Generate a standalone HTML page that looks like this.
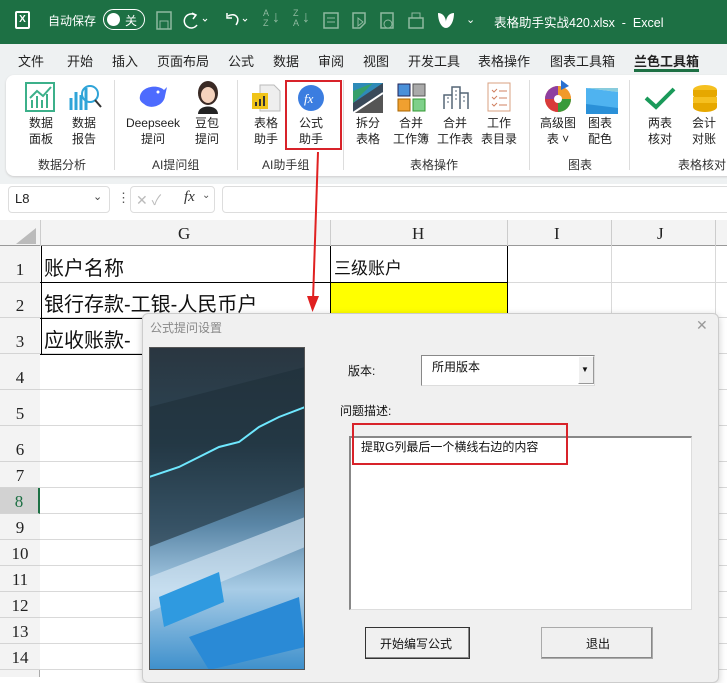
<!DOCTYPE html>
<html><head><meta charset="utf-8"><style>
*{margin:0;padding:0;box-sizing:border-box}
body{width:727px;height:677px;overflow:hidden;position:relative;background:#fff;font-family:"Liberation Sans","Noto Sans CJK SC",sans-serif;}
.a{position:absolute}
.t{position:absolute;white-space:nowrap}
.tab{position:absolute;top:51px;font-size:13px;color:#222;white-space:nowrap}
.lbl{position:absolute;font-size:12px;color:#222;text-align:center;line-height:16px;width:60px}
.ser{font-family:"Liberation Serif","Noto Serif CJK SC",serif}
.rh{position:absolute;left:0;width:40px;text-align:center;font-size:17px;color:#222;border-bottom:1px solid #d4d4d4;background:#f3f3f3;font-family:"Liberation Serif",serif}
.hl{position:absolute;left:40px;width:687px;height:1px;background:#d9d9d9}
.ic{position:absolute;top:10px}
</style></head><body>
<!-- title bar -->
<div class="a" style="left:0;top:0;width:727px;height:44px;background:#1d7044"></div>
<div class="t" style="left:15px;top:11px;width:15px;height:18px;border:2px solid #fff;border-radius:2px;color:#fff;font-size:10px;font-weight:bold;line-height:13px;text-align:center">X</div>
<div class="t" style="left:48px;top:12px;color:#fff;font-size:12px">自动保存</div>
<div class="a" style="left:103px;top:9px;width:42px;height:21px;border:1.5px solid #fff;border-radius:11px"></div>
<div class="a" style="left:107px;top:13px;width:13px;height:13px;border-radius:50%;background:#fff"></div>
<div class="t" style="left:125px;top:12px;color:#fff;font-size:12px">关</div>
<svg class="ic" style="left:155px" width="20" height="22"><rect x="2" y="2" width="14" height="17" fill="none" stroke="#8fb9a0" stroke-width="1.5"/><rect x="5" y="11" width="8" height="8" fill="none" stroke="#8fb9a0"/></svg>
<svg class="ic" style="left:183px" width="30" height="22"><path d="M12 5 A7 7 0 1 0 14 15" fill="none" stroke="#fff" stroke-width="1.5"/><path d="M9 3 L13 5 L10 9" fill="none" stroke="#fff" stroke-width="1.5"/><path d="M20 9l2 2 2-2" stroke="#fff" fill="none"/></svg>
<svg class="ic" style="left:223px" width="30" height="22"><path d="M5 6 C12 2 18 8 13 15" fill="none" stroke="#fff" stroke-width="1.5"/><path d="M4 3 V8 H9" fill="none" stroke="#fff" stroke-width="1.5"/><path d="M20 9l2 2 2-2" stroke="#fff" fill="none"/></svg>
<div class="t" style="left:263px;top:8px;color:#8fb9a0;font-size:9px;line-height:10px">A<br>Z</div>
<div class="t" style="left:272px;top:9px;color:#8fb9a0;font-size:16px">↓</div>
<div class="t" style="left:293px;top:8px;color:#8fb9a0;font-size:9px;line-height:10px">Z<br>A</div>
<div class="t" style="left:302px;top:9px;color:#8fb9a0;font-size:16px">↓</div>
<svg class="ic" style="left:322px" width="20" height="22"><rect x="2" y="3" width="14" height="15" fill="none" stroke="#8fb9a0" stroke-width="1.5"/><path d="M5 8h8M5 12h8" stroke="#8fb9a0"/></svg>
<svg class="ic" style="left:350px" width="20" height="22"><path d="M3 3h12v10l-5 5H3z" fill="none" stroke="#8fb9a0" stroke-width="1.5"/><path d="M8 8l5 4-5 4z" fill="none" stroke="#8fb9a0"/></svg>
<svg class="ic" style="left:378px" width="20" height="22"><path d="M3 3h12v15H3z" fill="none" stroke="#8fb9a0" stroke-width="1.5"/><circle cx="10" cy="14" r="4" fill="#1d7044" stroke="#8fb9a0"/></svg>
<svg class="ic" style="left:406px" width="20" height="22"><rect x="3" y="8" width="14" height="10" fill="none" stroke="#8fb9a0" stroke-width="1.5"/><rect x="6" y="3" width="8" height="5" fill="none" stroke="#8fb9a0"/></svg>
<svg class="ic" style="left:436px" width="20" height="22"><path d="M2 3 C8 3 10 9 10 12 C10 9 12 3 18 3 C18 12 14 18 10 18 C6 18 2 12 2 3Z" fill="#fff"/></svg>
<div class="t" style="left:466px;top:13px;color:#fff;font-size:11px">⌄</div>
<div class="t" style="left:494px;top:12px;color:#fff;font-size:12.5px">表格助手实战420.xlsx &nbsp;- &nbsp;Excel</div>
<!-- tabs -->
<div class="a" style="left:0;top:44px;width:727px;height:140px;background:#eef1f2"></div>
<div class="tab" style="left:18px">文件</div>
<div class="tab" style="left:67px">开始</div>
<div class="tab" style="left:112px">插入</div>
<div class="tab" style="left:157px">页面布局</div>
<div class="tab" style="left:228px">公式</div>
<div class="tab" style="left:273px">数据</div>
<div class="tab" style="left:318px">审阅</div>
<div class="tab" style="left:363px">视图</div>
<div class="tab" style="left:408px">开发工具</div>
<div class="tab" style="left:478px">表格操作</div>
<div class="tab" style="left:550px">图表工具箱</div>
<div class="tab" style="left:634px;font-weight:bold">兰色工具箱</div>
<div class="a" style="left:634px;top:69px;width:65px;height:3px;background:#1d7044"></div>
<!-- ribbon -->
<div class="a" style="left:6px;top:75px;width:730px;height:101px;background:#fff;border-radius:8px;box-shadow:0 1px 2px #ccc"></div>
<div class="a" style="left:114px;top:80px;width:1px;height:90px;background:#ddd"></div>
<div class="a" style="left:237px;top:80px;width:1px;height:90px;background:#ddd"></div>
<div class="a" style="left:343px;top:80px;width:1px;height:90px;background:#ddd"></div>
<div class="a" style="left:529px;top:80px;width:1px;height:90px;background:#ddd"></div>
<div class="a" style="left:629px;top:80px;width:1px;height:90px;background:#ddd"></div>
<!-- icons -->
<svg class="a" style="left:25px;top:82px" width="30" height="30"><rect x="1" y="1" width="28" height="28" fill="none" stroke="#3cb08a" stroke-width="2"/><path d="M5 16 L12 9 L18 14 L26 5" stroke="#3cb08a" stroke-width="2" fill="none"/><path d="M7 26V18M12 26V14M17 26V18M22 26V12" stroke="#3cb08a" stroke-width="2"/></svg>
<svg class="a" style="left:68px;top:82px" width="34" height="30"><path d="M3 28V16M8 28V10M13 28V13M18 28V6" stroke="#2fa4d8" stroke-width="3"/><circle cx="22" cy="12" r="8" fill="none" stroke="#2fa4d8" stroke-width="2"/><path d="M27 18L33 25" stroke="#333" stroke-width="2"/></svg>
<svg class="a" style="left:138px;top:84px" width="30" height="26"><path d="M2 12 C4 2 20 0 26 6 L29 3 L27 12 C26 22 12 26 6 20 C3 18 1 16 2 12Z" fill="#4d6bfe"/><circle cx="20" cy="8" r="1.5" fill="#fff"/></svg>
<svg class="a" style="left:195px;top:80px" width="26" height="34"><ellipse cx="13" cy="13" rx="10" ry="12" fill="#3a2a25"/><ellipse cx="13" cy="15" rx="7" ry="8" fill="#f4d2bd"/><path d="M3 34 C3 24 23 24 23 34Z" fill="#222"/></svg>
<svg class="a" style="left:250px;top:83px" width="32" height="30"><path d="M10 2H24L30 8V28H10Z" fill="#eee" stroke="#bbb"/><rect x="2" y="10" width="16" height="16" fill="#f0c419"/><path d="M6 23V19M10 23V16M14 23V13" stroke="#333" stroke-width="2"/></svg>
<svg class="a" style="left:297px;top:84px" width="28" height="28"><circle cx="14" cy="14" r="13" fill="#3b7de0"/><text x="7" y="19" font-size="13" font-style="italic" fill="#fff" font-family="Liberation Serif">fx</text></svg>
<svg class="a" style="left:353px;top:83px" width="30" height="30"><rect width="30" height="30" fill="#3a4a5a"/><path d="M0 0H30L0 20Z" fill="#2e8bb8"/><path d="M0 8 L20 0 L0 20Z" fill="#36a06a"/><path d="M0 30 L30 12 V30Z" fill="#555"/><path d="M0 30L30 10" stroke="#fff" stroke-width="2"/></svg>
<svg class="a" style="left:397px;top:83px" width="30" height="30"><rect x="1" y="1" width="12" height="12" fill="#4a90d9" stroke="#225"/><rect x="16" y="1" width="12" height="12" fill="#aaa" stroke="#555"/><rect x="1" y="16" width="12" height="12" fill="#f0a030" stroke="#a60"/><rect x="16" y="16" width="12" height="12" fill="#7fd08a" stroke="#393"/></svg>
<svg class="a" style="left:442px;top:83px" width="28" height="28"><path d="M2 26V12H10V26M10 26V4H18V26M18 26V10H26V26" fill="none" stroke="#567" stroke-width="1.5"/><path d="M5 15h2M5 19h2M13 8h2M13 12h2M13 16h2M21 14h2M21 18h2" stroke="#567"/></svg>
<svg class="a" style="left:487px;top:82px" width="24" height="30"><rect x="1" y="1" width="22" height="28" fill="#fff" stroke="#d9a080"/><path d="M5 8l2 2 3-3M5 15l2 2 3-3M5 22l2 2 3-3M12 9h8M12 16h8M12 23h8" stroke="#d08060" fill="none"/></svg>
<svg class="a" style="left:543px;top:80px" width="30" height="34"><circle cx="15" cy="19" r="13" fill="#e86a2a"/><path d="M15 19 L15 6 A13 13 0 0 1 28 19Z" fill="#f29a2a"/><path d="M15 19 L2 19 A13 13 0 0 1 15 6Z" fill="#8e3fa0"/><path d="M15 19 L15 32 A13 13 0 0 1 2 19Z" fill="#d83a3a"/><path d="M15 19 L28 19 A13 13 0 0 1 15 32Z" fill="#3a9a3a"/><circle cx="15" cy="19" r="4" fill="#fff"/><path d="M18 0 L26 6 L18 10Z" fill="#2a70d0"/></svg>
<svg class="a" style="left:586px;top:88px" width="32" height="26"><path d="M0 0H32V4L0 0Z" fill="#8cd"/><path d="M0 0 L32 4 V26 H0Z" fill="#4fb3f0"/><path d="M0 16 L32 20 V26 H0Z" fill="#2a90d8"/></svg>
<svg class="a" style="left:644px;top:86px" width="32" height="24"><path d="M2 12 L12 21 L30 3" stroke="#1a9a5a" stroke-width="4" fill="none"/></svg>
<svg class="a" style="left:690px;top:83px" width="30" height="30"><ellipse cx="15" cy="7" rx="12" ry="5" fill="#f5c020"/><path d="M3 7v5a12 5 0 0 0 24 0V7" fill="#e6a800"/><path d="M3 14v5a12 5 0 0 0 24 0v-5" fill="#f5c020"/><path d="M3 20v4a12 5 0 0 0 24 0v-4" fill="#e6a800"/></svg>
<!-- ribbon labels -->
<div class="lbl" style="left:11px;top:115px">数据<br>面板</div>
<div class="lbl" style="left:54px;top:115px">数据<br>报告</div>
<div class="lbl" style="left:123px;top:115px">Deepseek<br>提问</div>
<div class="lbl" style="left:177px;top:115px">豆包<br>提问</div>
<div class="lbl" style="left:236px;top:115px">表格<br>助手</div>
<div class="lbl" style="left:281px;top:115px">公式<br>助手</div>
<div class="lbl" style="left:338px;top:115px">拆分<br>表格</div>
<div class="lbl" style="left:381px;top:115px">合并<br>工作簿</div>
<div class="lbl" style="left:425px;top:115px">合并<br>工作表</div>
<div class="lbl" style="left:469px;top:115px">工作<br>表目录</div>
<div class="lbl" style="left:528px;top:115px">高级图<br>表 ˅</div>
<div class="lbl" style="left:570px;top:115px">图表<br>配色</div>
<div class="lbl" style="left:630px;top:115px">两表<br>核对</div>
<div class="lbl" style="left:674px;top:115px">会计<br>对账</div>
<div class="t" style="left:38px;top:156px;font-size:12px;color:#333">数据分析</div>
<div class="t" style="left:152px;top:156px;font-size:12px;color:#333">AI提问组</div>
<div class="t" style="left:262px;top:156px;font-size:12px;color:#333">AI助手组</div>
<div class="t" style="left:410px;top:156px;font-size:12px;color:#333">表格操作</div>
<div class="t" style="left:568px;top:156px;font-size:12px;color:#333">图表</div>
<div class="t" style="left:678px;top:156px;font-size:12px;color:#333">表格核对</div>
<div class="a" style="left:285px;top:80px;width:57px;height:70px;border:2px solid #d8232a"></div>
<!-- formula bar -->
<div class="a" style="left:8px;top:186px;width:102px;height:27px;background:#fff;border:1px solid #ddd;border-radius:4px"></div>
<div class="t" style="left:15px;top:191px;font-size:13px;color:#222">L8</div>
<div class="t" style="left:93px;top:190px;font-size:11px;color:#444">⌄</div>
<div class="t" style="left:117px;top:190px;font-size:13px;color:#555">⋮</div>
<div class="a" style="left:130px;top:186px;width:85px;height:27px;background:#fff;border:1px solid #ddd;border-radius:4px"></div>
<div class="t" style="left:136px;top:190px;font-size:14px;color:#bbb">✕ ✓</div>
<div class="t ser" style="left:184px;top:189px;font-size:15px;font-style:italic;color:#333">fx</div>
<div class="t" style="left:202px;top:190px;font-size:10px;color:#555">⌄</div>
<div class="a" style="left:222px;top:186px;width:510px;height:27px;background:#fff;border:1px solid #ddd;border-radius:4px"></div>
<!-- grid headers -->
<div class="a" style="left:0;top:220px;width:727px;height:26px;background:#f3f3f3;border-bottom:1px solid #999"></div>
<svg class="a" style="left:10px;top:226px" width="28" height="20"><path d="M26 2V18H6Z" fill="#bbb"/></svg>
<div class="a" style="left:40px;top:220px;width:1px;height:26px;background:#ccc"></div>
<div class="a" style="left:330px;top:220px;width:1px;height:26px;background:#ccc"></div>
<div class="a" style="left:507px;top:220px;width:1px;height:26px;background:#ccc"></div>
<div class="a" style="left:611px;top:220px;width:1px;height:26px;background:#ccc"></div>
<div class="a" style="left:715px;top:220px;width:1px;height:26px;background:#ccc"></div>
<div class="t ser" style="left:178px;top:224px;font-size:17px;color:#222">G</div>
<div class="t ser" style="left:412px;top:224px;font-size:17px;color:#222">H</div>
<div class="t ser" style="left:554px;top:224px;font-size:17px;color:#222">I</div>
<div class="t ser" style="left:657px;top:224px;font-size:17px;color:#222">J</div>
<!-- row headers -->
<div class="a" style="left:0;top:246px;width:40px;height:431px;background:#f3f3f3;border-right:1px solid #aaa"></div>
<div class="rh" style="top:246px;height:37px;line-height:48px">1</div>
<div class="rh" style="top:283px;height:35px;line-height:46px">2</div>
<div class="rh" style="top:318px;height:36px;line-height:48px">3</div>
<div class="rh" style="top:354px;height:36px;line-height:48px">4</div>
<div class="rh" style="top:390px;height:36px;line-height:48px">5</div>
<div class="rh" style="top:426px;height:36px;line-height:48px">6</div>
<div class="rh" style="top:462px;height:26px;line-height:28px">7</div>
<div class="rh" style="top:488px;height:26px;line-height:28px;background:#d2d2d2;color:#1d7044;border-right:2px solid #1d7044">8</div>
<div class="rh" style="top:514px;height:26px;line-height:28px">9</div>
<div class="rh" style="top:540px;height:26px;line-height:28px">10</div>
<div class="rh" style="top:566px;height:26px;line-height:28px">11</div>
<div class="rh" style="top:592px;height:26px;line-height:28px">12</div>
<div class="rh" style="top:618px;height:26px;line-height:28px">13</div>
<div class="rh" style="top:644px;height:26px;line-height:28px">14</div>
<!-- grid lines -->
<div class="hl" style="top:282px"></div><div class="hl" style="top:317px"></div><div class="hl" style="top:353px"></div>
<div class="hl" style="top:389px"></div><div class="hl" style="top:425px"></div><div class="hl" style="top:461px"></div>
<div class="hl" style="top:487px"></div><div class="hl" style="top:513px"></div><div class="hl" style="top:539px"></div>
<div class="hl" style="top:565px"></div><div class="hl" style="top:591px"></div><div class="hl" style="top:617px"></div>
<div class="hl" style="top:643px"></div><div class="hl" style="top:669px"></div>
<div class="a" style="left:611px;top:246px;width:1px;height:431px;background:#d9d9d9"></div>
<div class="a" style="left:715px;top:246px;width:1px;height:431px;background:#d9d9d9"></div>
<!-- data cells -->
<div class="a" style="left:330px;top:283px;width:177px;height:35px;background:#ffff00"></div>
<div class="a" style="left:40px;top:282px;width:467px;height:1px;background:#000"></div>
<div class="a" style="left:40px;top:318px;width:467px;height:1px;background:#000"></div>
<div class="a" style="left:40px;top:354px;width:290px;height:1px;background:#000"></div>
<div class="a" style="left:330px;top:246px;width:1px;height:108px;background:#000"></div>
<div class="a" style="left:507px;top:246px;width:1px;height:72px;background:#000"></div>
<div class="a" style="left:41px;top:246px;width:1px;height:108px;background:#000"></div>
<div class="t" style="left:44px;top:252px;font-size:20px;color:#111">账户名称</div>
<div class="t" style="left:334px;top:254px;font-size:17px;color:#111">三级账户</div>
<div class="t" style="left:44px;top:288px;font-size:20px;color:#111">银行存款-工银-人民币户</div>
<div class="t" style="left:44px;top:324px;font-size:20px;color:#111">应收账款-</div>
<!-- arrow -->
<svg class="a" style="left:300px;top:150px" width="30" height="165"><path d="M18 2 L13 150" stroke="#e02020" stroke-width="2"/><path d="M7 146 L12.5 162 L19 146Z" fill="#e02020"/></svg>
<!-- dialog -->
<div class="a" style="left:142px;top:313px;width:577px;height:370px;background:#f0f0f0;border:1px solid #ccc;border-radius:6px;box-shadow:0 2px 8px rgba(0,0,0,.2)"></div>
<div class="t" style="left:150px;top:319px;font-size:12px;color:#888">公式提问设置</div>
<div class="t" style="left:696px;top:317px;font-size:14px;color:#999">✕</div>
<svg class="a" style="left:149px;top:347px" width="156" height="323">
<defs><linearGradient id="g" x1="0" y1="0" x2="0" y2="1"><stop offset="0" stop-color="#2a3640"/><stop offset="0.3" stop-color="#2c4656"/><stop offset="0.55" stop-color="#5a86a6"/><stop offset="0.75" stop-color="#a8cce6"/><stop offset="1" stop-color="#3e90cc"/></linearGradient></defs>
<rect width="156" height="323" fill="url(#g)"/>
<path d="M0 60 L156 20 L156 140 L0 200Z" fill="#1e2e38" opacity=".6"/>
<path d="M0 130 L30 120 L50 110 L70 100 L90 95 L110 80 L130 70 L156 60" stroke="#6fe8ff" stroke-width="2" fill="none"/>
<path d="M0 230 L156 170 L156 200 L0 265Z" fill="#dbeaf5" opacity=".6"/>
<path d="M10 250 L70 225 L75 255 L15 280Z" fill="#2f9ae0"/>
<path d="M40 290 L150 250 L156 300 L60 323Z" fill="#2a8ad6"/>
</svg>
<div class="a" style="left:149px;top:347px;width:156px;height:323px;border:1px solid #555"></div>
<div class="t" style="left:348px;top:362px;font-size:12px;color:#111">版本:</div>
<div class="a" style="left:421px;top:355px;width:174px;height:31px;background:#fff;border:1px solid #888;border-right-color:#ddd;border-bottom-color:#ddd"></div>
<div class="t" style="left:432px;top:358px;font-size:12px;color:#111">所用版本</div>
<div class="a" style="left:578px;top:356px;width:16px;height:28px;background:#f0f0f0;border:1px solid #999;border-top-color:#fff;border-left-color:#fff"></div>
<div class="t" style="left:581px;top:365px;font-size:8px;color:#111">▼</div>
<div class="t" style="left:340px;top:402px;font-size:12px;color:#111">问题描述:</div>
<div class="a" style="left:349px;top:436px;width:343px;height:174px;background:#fff;border:2px solid #888;border-right:1px solid #ddd;border-bottom:1px solid #ddd"></div>
<div class="t" style="left:361px;top:438px;font-size:12px;color:#111">提取G列最后一个横线右边的内容</div>
<div class="a" style="left:352px;top:423px;width:216px;height:42px;border:2px solid #d8232a"></div>
<div class="a" style="left:365px;top:627px;width:105px;height:32px;background:#f0f0f0;border:1px solid #333;box-shadow:inset -1px -1px #888"></div>
<div class="t" style="left:380px;top:635px;font-size:12px;color:#111">开始编写公式</div>
<div class="a" style="left:541px;top:627px;width:112px;height:32px;background:#f0f0f0;border:1px solid #aaa;box-shadow:inset -1px -1px #888"></div>
<div class="t" style="left:586px;top:635px;font-size:12px;color:#111">退出</div>
</body></html>
